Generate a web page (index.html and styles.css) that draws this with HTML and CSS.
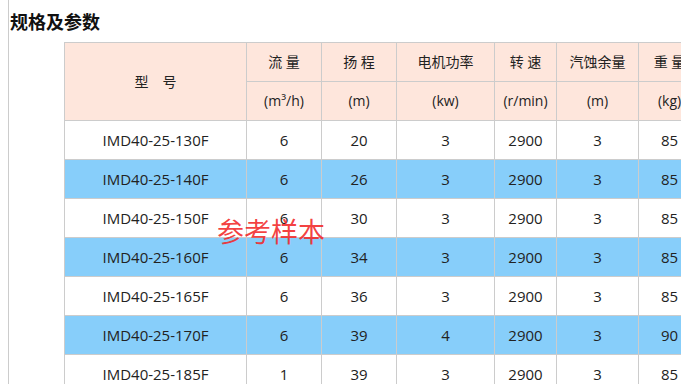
FILE: index.html
```html
<!DOCTYPE html>
<html lang="zh-CN">
<head>
<meta charset="utf-8">
<title>规格及参数</title>
<link rel="stylesheet" href="styles.css">
</head>
<body>
<div class="page">
  <h2 class="title">规格及参数</h2>
  <div class="table-wrap">
    <table class="spec">
      <colgroup>
        <col class="c-model"><col class="c-a"><col class="c-a"><col class="c-b"><col class="c-c"><col class="c-d"><col class="c-c">
      </colgroup>
      <thead>
        <tr>
          <th rowspan="2">型　号</th>
          <th>流 量</th>
          <th>扬 程</th>
          <th>电机功率</th>
          <th>转 速</th>
          <th>汽蚀余量</th>
          <th>重 量</th>
        </tr>
        <tr>
          <th>(m³/h)</th>
          <th>(m)</th>
          <th>(kw)</th>
          <th>(r/min)</th>
          <th>(m)</th>
          <th>(kg)</th>
        </tr>
      </thead>
      <tbody>
        <tr><td>IMD40-25-130F</td><td>6</td><td>20</td><td>3</td><td>2900</td><td>3</td><td>85</td></tr>
        <tr class="alt"><td>IMD40-25-140F</td><td>6</td><td>26</td><td>3</td><td>2900</td><td>3</td><td>85</td></tr>
        <tr><td>IMD40-25-150F</td><td>6</td><td>30</td><td>3</td><td>2900</td><td>3</td><td>85</td></tr>
        <tr class="alt"><td>IMD40-25-160F</td><td>6</td><td>34</td><td>3</td><td>2900</td><td>3</td><td>85</td></tr>
        <tr><td>IMD40-25-165F</td><td>6</td><td>36</td><td>3</td><td>2900</td><td>3</td><td>85</td></tr>
        <tr class="alt"><td>IMD40-25-170F</td><td>6</td><td>39</td><td>4</td><td>2900</td><td>3</td><td>90</td></tr>
        <tr><td>IMD40-25-185F</td><td>1</td><td>39</td><td>3</td><td>2900</td><td>3</td><td>85</td></tr>
      </tbody>
    </table>
    <div class="watermark">参考样本</div>
  </div>
</div>
</body>
</html>
```

FILE: styles.css
```css
html { overflow: hidden; }
body {
  margin: 0;
  background: #fff;
  font-family: "Noto Sans CJK SC", "Open Sans", sans-serif;
  color: #333;
}
.page {
  margin-left: 8px;
  border-left: 1px solid #ccc;
  padding-left: 1px;
  min-height: 384px;
}
.title {
  margin: 0;
  padding-top: 8px;
  font-size: 18px;
  line-height: 26px;
  font-weight: bold;
  color: #111;
}
.table-wrap {
  position: relative;
  margin-top: 8px;
  padding-left: 54px;
}
.spec {
  border-collapse: collapse;
  table-layout: fixed;
  width: 636px;
  font-family: "Open Sans", "Noto Sans CJK SC", sans-serif;
  font-size: 14px;
}
.c-model { width: 182px; }
.c-a { width: 75px; }
.c-b { width: 98px; }
.c-c { width: 62px; }
.c-d { width: 82px; }
.spec th, .spec td {
  border: 1px solid #ccc;
  height: 38px;
  padding: 0;
  text-align: center;
  vertical-align: middle;
  font-weight: normal;
  white-space: nowrap;
  line-height: 20px;
}
.spec thead th {
  background: #fee6dc;
  color: #222;
}
.spec td {
  color: #222;
  font-size: 15px;
}
.spec tr.alt td { background: #87cefa; }
.watermark {
  position: absolute;
  left: 207px;
  top: 173px;
  font-family: "Noto Sans CJK SC", sans-serif;
  font-size: 27px;
  line-height: 32px;
  color: rgba(242, 40, 40, 0.88);
  pointer-events: none;
}
```
